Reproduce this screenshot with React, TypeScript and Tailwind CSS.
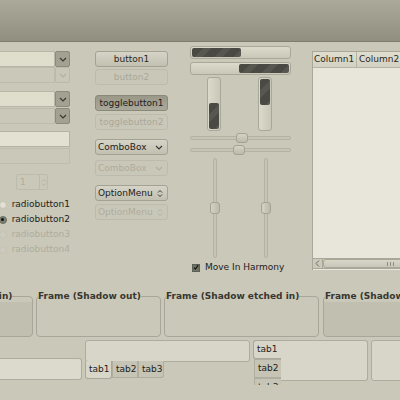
import React from "react";

const Chevron = ({ c = "#3a3932" }: { c?: string }) => (
  <svg width="8" height="5" viewBox="0 0 8 5"><path d="M1 1l3 3 3-3" fill="none" stroke={c} strokeWidth="1.2" /></svg>
);
const UpDown = ({ c = "#3a3932" }: { c?: string }) => (
  <svg width="6" height="9" viewBox="0 0 6 9"><path d="M1 3.5l2-2 2 2M1 5.5l2 2 2-2" fill="none" stroke={c} strokeWidth="1" /></svg>
);

const ComboEntry = ({ fill, btnDark, cls = "" }: { fill: string; btnDark: boolean; cls?: string }) => (
  <div className={`flex h-[16px] ${cls}`}>
    <div className={`flex-1 border border-l-0 rounded-r-none ${fill}`} />
    <div className={`w-[15px] flex items-center justify-center border rounded-[2px] ${btnDark ? "bg-[#a3a191] border-[#8c8a7b]" : "bg-[#c9c7b8] border-[#bbb9aa]"}`}>
      <Chevron c={btnDark ? "#3a3932" : "#b3b1a2"} />
    </div>
  </div>
);

const Btn = ({ children, kind, cls = "" }: { children: React.ReactNode; kind: "n" | "d" | "a"; cls?: string }) => {
  const k =
    kind === "n"
      ? "border-[#a4a293] bg-gradient-to-b from-[#d6d4c6] to-[#c2c0b1] text-[#2a2924]"
      : kind === "a"
      ? "border-[#8b897a] bg-gradient-to-b from-[#9a9888] to-[#aaa898] text-[#22211c]"
      : "border-[#bdbbac] bg-[#c9c7b8] text-[#a9a798]";
  return <div className={`h-[16px] rounded-[3px] border flex items-center justify-center ${k} ${cls}`}>{children}</div>;
};

const ComboBtn = ({ label, dis, opt, cls = "" }: { label: string; dis?: boolean; opt?: boolean; cls?: string }) => (
  <div
    className={`h-[16px] rounded-[3px] border flex items-center justify-between pl-[2px] pr-[4px] ${
      dis ? "border-[#bdbbac] bg-[#c9c7b8] text-[#aeac9d]" : "border-[#a4a293] bg-gradient-to-b from-[#d6d4c6] to-[#c2c0b1] text-[#22211c]"
    } ${cls}`}
  >
    <span>{label}</span>
    {opt ? <UpDown c={dis ? "#b3b1a2" : "#3a3932"} /> : <Chevron c={dis ? "#b3b1a2" : "#3a3932"} />}
  </div>
);

const stripes =
  "bg-[repeating-linear-gradient(135deg,#4a4943_0px,#4a4943_8px,#58574f_8px,#58574f_14px)]";

const Radio = ({ label, state }: { label: string; state: "off" | "on" | "dis" }) => (
  <div className="h-[15px] flex items-center">
    <div
      className={`w-[8px] h-[8px] rounded-full border flex items-center justify-center ${
        state === "on"
          ? "bg-[#7c8070] border-[#6a6d5f]"
          : state === "off"
          ? "bg-[#e2e0d2] border-[#c3c1b2]"
          : "bg-[#cdcbbd] border-[#c4c2b3]"
      }`}
    >
      {state === "on" && <div className="w-[3px] h-[3px] rounded-full bg-[#111]" />}
    </div>
    <span className={`ml-[5px] ${state === "dis" ? "text-[#aeac9d]" : "text-[#22211c]"}`}>{label}</span>
  </div>
);

const HScale = ({ knob, cls = "" }: { knob: number; cls?: string }) => (
  <div className={`relative h-[10px] flex items-center ${cls}`}>
    <div className="w-full h-[4px] rounded-[2px] border border-[#b4b2a3] bg-[#c6c4b5]" />
    <div
      className="absolute top-0 w-[12px] h-[10px] rounded-[3px] border border-[#a4a293] bg-gradient-to-b from-[#d4d2c4] to-[#bcbaab]"
      style={{ left: knob }}
    />
  </div>
);

const VScale = ({ cls = "" }: { cls?: string }) => (
  <div className={`relative w-[10px] h-[100px] flex justify-center ${cls}`}>
    <div className="h-full w-[4px] rounded-[2px] border border-[#b4b2a3] bg-[#c6c4b5]" />
    <div className="absolute left-0 top-[44px] w-[10px] h-[12px] rounded-[3px] border border-[#a4a293] bg-gradient-to-r from-[#d4d2c4] to-[#bcbaab]" />
  </div>
);

const Frame = ({ label, dark, cls = "" }: { label: string; dark?: boolean; cls?: string }) => (
  <fieldset className={`h-[46px] rounded-[4px] border border-[#a8a698] ${dark ? "bg-[linear-gradient(to_bottom,transparent_5px,#c1bfb0_5px)]" : ""} ${cls}`}>
    <legend className="ml-[1px] font-bold text-[9px] leading-[11px] text-[#37362f]">{label}</legend>
  </fieldset>
);

const Tab = ({ label, active, cls = "" }: { label: string; active?: boolean; cls?: string }) => (
  <div
    className={`shrink-0 flex items-center pl-[3px] ${
      active ? "bg-[#d8d6c8] border-[#a9a798]" : "bg-[#c6c4b5] border-[#b0ae9f]"
    } border text-[#22211c] ${cls}`}
  >
    {label}
  </div>
);

export default function App() {
  return (
    <div className="w-[400px] h-[400px] overflow-hidden bg-[#cac8b9] font-['DejaVu_Sans',sans-serif] text-[9px] leading-[11px] text-[#2e2d27]">
      <div className="h-[42px] bg-gradient-to-b from-[#aba999] to-[#918f80] border-b border-[#7f7d70]" />
      <div className="flex h-[243px]">
        {/* column 1 */}
        <div className="w-[70px] pt-[9px] flex flex-col shrink-0">
          <ComboEntry fill="bg-[#dfddcc] border-[#b8b6a7]" btnDark />
          <ComboEntry fill="bg-[#cac8b9] border-[#bdbbac]" btnDark={false} />
          <ComboEntry fill="bg-[#dfddcc] border-[#b8b6a7]" btnDark cls="mt-[8px]" />
          <ComboEntry fill="bg-[#cac8b9] border-[#bdbbac]" btnDark cls="mt-[1px]" />
          <div className="mt-[7px] h-[16px] border border-l-0 border-[#b5b3a4] bg-[#e3e1d2]" />
          <div className="mt-[1px] h-[16px] border border-l-0 border-[#bfbdae] bg-[#cac8b9]" />
          <div className="mt-[10px] ml-[16px] w-[32px] h-[16px] flex border border-[#bdbbac] rounded-[2px]">
            <span className="flex-1 pl-[3px] flex items-center text-[#aeac9d]">1</span>
            <div className="w-[8px] border-l border-[#bdbbac] flex items-center justify-center">
              <UpDown c="#b3b1a2" />
            </div>
          </div>
          <div className="mt-[7px] ml-[-1px] flex flex-col">
            <Radio label="radiobutton1" state="off" />
            <Radio label="radiobutton2" state="on" />
            <Radio label="radiobutton3" state="dis" />
            <Radio label="radiobutton4" state="dis" />
          </div>
        </div>
        {/* column 2 */}
        <div className="ml-[25px] w-[73px] pt-[9px] flex flex-col shrink-0">
          <Btn kind="n">button1</Btn>
          <Btn kind="d" cls="mt-[2px]">button2</Btn>
          <Btn kind="a" cls="mt-[10px]">togglebutton1</Btn>
          <Btn kind="d" cls="mt-[3px]">togglebutton2</Btn>
          <ComboBtn label="ComboBox" cls="mt-[9px]" />
          <ComboBtn label="ComboBox" dis cls="mt-[5px]" />
          <ComboBtn label="OptionMenu" opt cls="mt-[9px]" />
          <ComboBtn label="OptionMenu" opt dis cls="mt-[3px]" />
        </div>
        {/* column 3 */}
        <div className="ml-[22px] w-[101px] pt-[4px] flex flex-col shrink-0">
          <div className="h-[13px] rounded-[3px] border border-[#a9a798] bg-gradient-to-b from-[#dcdacb] to-[#c9c7b8] p-[1px] flex">
            <div className={`w-[49px] h-full rounded-[2px] ${stripes}`} />
          </div>
          <div className="mt-[3px] h-[13px] rounded-[3px] border border-[#a9a798] bg-gradient-to-b from-[#dcdacb] to-[#c9c7b8] p-[1px] flex justify-end">
            <div className={`w-[50px] h-full rounded-[2px] ${stripes}`} />
          </div>
          <div className="mt-[2px] h-[54px] flex">
            <div className="ml-[17px] w-[14px] h-full rounded-[3px] border border-[#a9a798] bg-gradient-to-r from-[#dcdacb] to-[#c9c7b8] p-[1px] flex flex-col justify-end">
              <div className={`h-[26px] rounded-[2px] ${stripes}`} />
            </div>
            <div className="ml-[37px] w-[14px] h-full rounded-[3px] border border-[#a9a798] bg-gradient-to-r from-[#dcdacb] to-[#c9c7b8] p-[1px] flex flex-col">
              <div className={`h-[26px] rounded-[2px] ${stripes}`} />
            </div>
          </div>
          <HScale knob={46} cls="mt-[2px]" />
          <HScale knob={43} cls="mt-[2px]" />
          <div className="mt-[3px] flex">
            <VScale cls="ml-[20px]" />
            <VScale cls="ml-[41px]" />
          </div>
          <div className="mt-[4px] flex items-center">
            <div className="ml-[2px] w-[8px] h-[8px] bg-[#6f7364] border border-[#5d6054] flex items-center justify-center">
              <svg width="7" height="7" viewBox="0 0 7 7"><path d="M1 3.5l1.8 2L6 0.8" fill="none" stroke="#111" strokeWidth="1.3" /></svg>
            </div>
            <span className="ml-[5px] text-[#22211c]">Move In Harmony</span>
          </div>
        </div>
        {/* column 4 */}
        <div className="ml-[21px] flex-1 pt-[9px]">
          <div className="w-[100px] h-[219px] border-l border-t border-[#a9a798] bg-[#e8e6da] flex flex-col">
            <div className="h-[16px] flex bg-gradient-to-b from-[#e0decf] to-[#d3d1c2] border-b border-[#b5b3a4]">
              <div className="w-[44px] pl-[1px] flex items-center border-r border-[#b5b3a4] text-[#2a2924]">Column1</div>
              <div className="flex-1 pl-[2px] flex items-center text-[#2a2924]">Column2</div>
            </div>
            <div className="flex-1" />
            <div className="h-[11px] mb-[1px] flex border-t border-b border-[#a9a798] bg-[#cbc9ba]">
              <div className="w-[10px] flex items-center justify-center border-r border-[#a9a798]">
                <svg width="5" height="7" viewBox="0 0 5 7"><path d="M4 0.5L1 3.5l3 3" fill="none" stroke="#6d6b5f" strokeWidth="1" /></svg>
              </div>
              <div className="flex-1 rounded-l-[3px] border border-[#a9a798] bg-gradient-to-b from-[#d8d6c8] to-[#c8c6b7] flex items-center pl-[63px] gap-[1px]">
                <div className="w-[1px] h-[4px] bg-[#8f8d80]" />
                <div className="w-[1px] h-[4px] bg-[#8f8d80] ml-[1px]" />
                <div className="w-[1px] h-[4px] bg-[#8f8d80] ml-[1px]" />
              </div>
            </div>
          </div>
        </div>
      </div>
      {/* frames */}
      <div className="h-[52px] pt-[6px] flex">
        <Frame label="Frame (Shadow in)" dark cls="ml-[-85px] w-[118px] shrink-0" />
        <Frame label="Frame (Shadow out)" cls="ml-[3px] w-[125px] shrink-0" />
        <Frame label="Frame (Shadow etched in)" cls="ml-[3px] w-[155px] shrink-0" />
        <Frame label="Frame (Shadow etched out)" dark cls="ml-[4px] w-[160px] shrink-0" />
      </div>
      {/* notebooks */}
      <div className="h-[48px] pt-[3px] flex overflow-hidden">
        <div className="w-[82px] shrink-0 pt-[18px]">
          <div className="h-[22px] border border-l-0 border-[#aeac9d] rounded-r-[3px] bg-[#dcdacc]" />
        </div>
        <div className="ml-[3px] w-[165px] shrink-0 flex flex-col">
          <div className="h-[22px] shrink-0 border border-[#aeac9d] rounded-[3px] bg-[#d8d6c8]" />
          <div className="flex h-[18px] mt-[-1px] shrink-0">
            <Tab label="tab1" active cls="w-[27px] border-t-0 rounded-b-[3px]" />
            <Tab label="tab2" cls="w-[26px] h-[17px] border-t-0" />
            <Tab label="tab3" cls="w-[26px] h-[17px] border-t-0 rounded-br-[3px]" />
          </div>
        </div>
        <div className="ml-[3px] w-[115px] shrink-0 flex items-start">
          <div className="w-[28px] flex flex-col shrink-0">
            <Tab label="tab1" active cls="h-[19px] border-r-0 rounded-l-[3px]" />
            <Tab label="tab2" cls="h-[19px] ml-[1px] border-r-0" />
            <Tab label="tab3" cls="h-[19px] ml-[1px] border-r-0" />
          </div>
          <div className="flex-1 h-[41px] border border-l-0 border-[#aeac9d] rounded-r-[3px] bg-[#d8d6c8]" />
        </div>
        <div className="ml-[3px] w-[60px] shrink-0 h-[41px] border border-[#aeac9d] rounded-[3px] bg-[#d8d6c8]" />
      </div>
    </div>
  );
}
